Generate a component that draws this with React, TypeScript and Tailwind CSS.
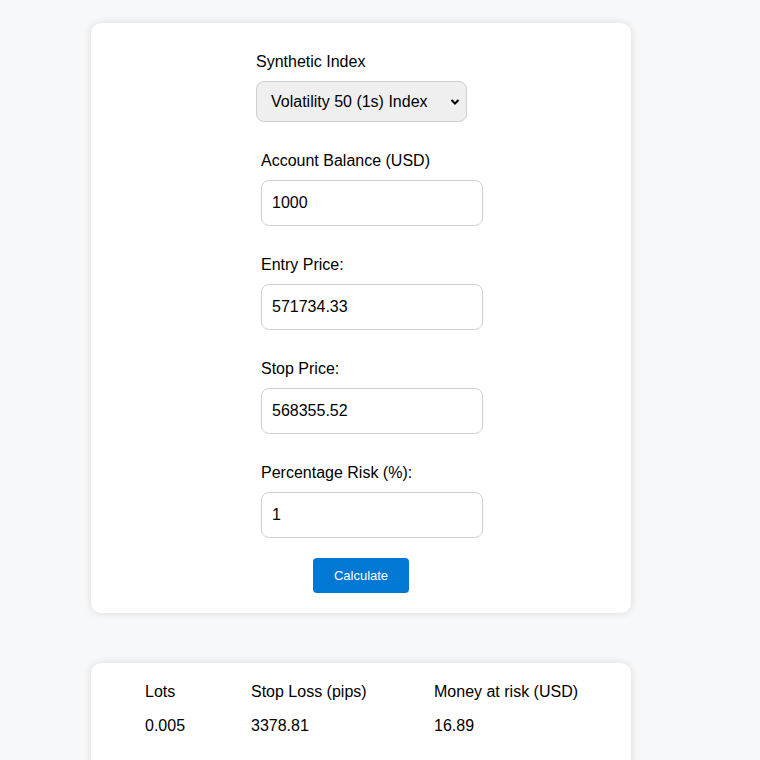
export default function App() {
  const font = { fontFamily: '"Liberation Sans", Arial, sans-serif' };
  const fields = [
    { label: "Account Balance (USD)", value: "1000" },
    { label: "Entry Price:", value: "571734.33" },
    { label: "Stop Price:", value: "568355.52" },
    { label: "Percentage Risk (%):", value: "1" },
  ];
  return (
    <div className="min-h-[760px] bg-[#f7f8fa] pt-[23px] text-[16px] text-black" style={font}>
      <div className="ml-[91px] w-[540px] rounded-[10px] bg-white pt-[30px] pb-[20px] shadow-[0_0_8px_rgba(0,0,0,0.12)]">
        <div className="ml-[165px] flex flex-col">
          <label className="leading-[18px]">Synthetic Index</label>
          <div className="relative mt-[10px] h-[41px] w-[211px] rounded-[8px] border border-[#cfcfcf] bg-[#efefef]">
            <span className="absolute left-[14px] top-[11px] leading-[18px]">Volatility 50 (1s) Index</span>
            <svg className="absolute right-[6px] top-[16px]" width="10" height="8" viewBox="0 0 10 8">
              <path d="M1.5 2 L5 5.5 L8.5 2" fill="none" stroke="#000" strokeWidth="2" />
            </svg>
          </div>
          {fields.map((f) => (
            <div key={f.label} className="ml-[5px] mt-[30px] flex flex-col">
              <label className="leading-[18px]">{f.label}</label>
              <div className="mt-[10px] flex h-[46px] w-[222px] items-center rounded-[8px] border border-[#cfcfcf] bg-white pl-[10px]">
                <span className="leading-[18px]">{f.value}</span>
              </div>
            </div>
          ))}
        </div>
        <div className="mt-[20px] flex justify-center">
          <button className="h-[35px] w-[96px] rounded-[4px] bg-[#0078d4] text-[13px] text-white">Calculate</button>
        </div>
      </div>
      <div className="ml-[91px] mt-[50px] w-[540px] rounded-t-[10px] bg-white pt-[20px] pb-[40px] shadow-[0_0_8px_rgba(0,0,0,0.12)]">
        <div className="ml-[54px] flex flex-col gap-[16px]">
          <div className="flex leading-[18px]">
            <span className="w-[106px]">Lots</span>
            <span className="w-[183px]">Stop Loss (pips)</span>
            <span>Money at risk (USD)</span>
          </div>
          <div className="flex leading-[18px]">
            <span className="w-[106px]">0.005</span>
            <span className="w-[183px]">3378.81</span>
            <span>16.89</span>
          </div>
        </div>
      </div>
    </div>
  );
}
